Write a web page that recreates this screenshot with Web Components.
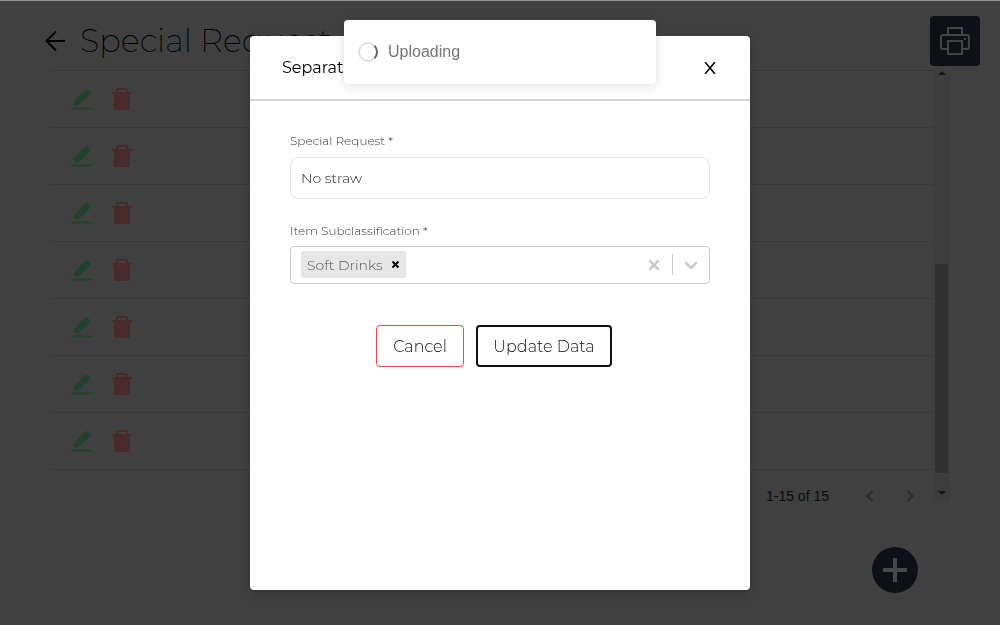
<!DOCTYPE html>
<html lang="en">
<head>
<meta charset="utf-8">
<title>Special Request</title>
<style>
html, body { margin: 0; background: #404040; }
body { font-family: Montserrat, Inter, "Open Sans", sans-serif; font-weight: 300; color: #000; }
</style>
</head>
<body>
<request-page></request-page>
<modal-dialog heading="Separate">
  <text-field label="Special Request *" value="No straw"></text-field>
  <multi-select label="Item Subclassification *" value="Soft Drinks"></multi-select>
  <action-bar></action-bar>
</modal-dialog>
<toast-message>Uploading</toast-message>

<script>
class Base extends HTMLElement {
  connectedCallback() {
    if (this.shadowRoot) return;
    const t = document.createElement('template');
    t.innerHTML = '<style>*{box-sizing:border-box}button{font:inherit;color:inherit;background:none;border:0;padding:0;margin:0;cursor:pointer}svg{display:block}</style>' + this.render();
    this.attachShadow({ mode: 'open' }).append(t.content.cloneNode(true));
  }
}

customElements.define('row-actions', class extends Base {
  render() {
    return `<style>
      :host { display: flex; align-items: center; gap: 16px; height: 57px; padding: 0 20px; box-sizing: border-box; border-bottom: 1px solid #383838; }
      button { width: 24px; height: 24px; }
    </style>
    <button aria-label="Edit"><svg width="24" height="24" viewBox="0 0 24 24" fill="#22412d"><path d="M5 13 16.500 1.500 21 6 9.500 17.500Q8 18.500 4 18Q3.500 14.500 5 13Z"/><rect x="1" y="20.500" width="22" height="2" rx="1"/></svg></button>
    <button aria-label="Delete"><svg width="24" height="24" viewBox="0 0 24 24" fill="#482a2a"><path fill-rule="evenodd" d="M6 5V3a2 2 0 0 1 2-2h8a2 2 0 0 1 2 2v2h4v2h-2v14a2 2 0 0 1-2 2H6a2 2 0 0 1-2-2V7H2V5ZM8 5h8V3H8Z"/></svg></button>`;
  }
});

customElements.define('list-scrollbar', class extends Base {
  render() {
    return `<style>
      :host { display: flex; flex-direction: column; align-items: center; justify-content: space-between; width: 17px; padding: 1px 0 7px; box-sizing: border-box; background: #3d3d3d; }
      .thumb { width: 13px; height: 209px; margin: auto 0 18px; background: #303030; }
    </style>
    <svg width="8" height="4" viewBox="0 0 8 4" fill="#141414"><path d="M0 4 4 0l4 4z"/></svg>
    <div class="thumb"></div>
    <svg width="8" height="4" viewBox="0 0 8 4" fill="#141414"><path d="M0 0h8L4 4z"/></svg>`;
  }
});

customElements.define('page-nav', class extends Base {
  render() {
    return `<style>
      :host { display: flex; align-items: center; justify-content: flex-end; height: 32px; padding: 20px 11px 0 0; box-sizing: border-box; font: 14px "Liberation Sans", Arial, sans-serif; color: #0c0c0c; }
      span { margin-right: 29px; }
      button { width: 24px; height: 24px; color: #2b2b2b; }
      button + button { margin-left: 16px; }
    </style>
    <span>1-15 of 15</span>
    <button aria-label="Previous page"><svg width="24" height="24" viewBox="0 0 24 24" fill="currentColor"><path d="M15.410 7.410 14 6l-6 6 6 6 1.410-1.410L10.830 12z"/></svg></button>
    <button aria-label="Next page"><svg width="24" height="24" viewBox="0 0 24 24" fill="currentColor"><path d="M10 6 8.590 7.410 13.170 12l-4.580 4.590L10 18l6-6z"/></svg></button>`;
  }
});

customElements.define('request-page', class extends Base {
  render() {
    return `<style>
      :host { display: block; min-height: 100vh; box-sizing: border-box; padding: 15px 20px 32px 44px; border-top: 1px solid #8e918f; }
      header { display: flex; align-items: center; height: 50px; }
      .back { width: 24px; height: 24px; margin-right: 12px; }
      h1 { flex: 1; margin: 0; font-size: 32px; line-height: 40px; font-weight: 200; white-space: nowrap; }
      .print { display: grid; place-items: center; width: 50px; height: 50px; border-radius: 4px; background: #0d1116; }
      .list { display: flex; margin: 4px 30px 0 6px; }
      .rows { flex: 1; border-top: 1px solid #383838; }
      footer { display: flex; justify-content: flex-end; padding: 45px 62px 0 0; }
      .add { display: grid; place-items: center; width: 46px; height: 46px; border-radius: 50%; background: #0d1116; }
    </style>
    <header>
      <button class="back" aria-label="Back"><svg width="24" height="24" viewBox="0 0 24 24" fill="none" stroke="#000" stroke-width="2"><path d="M21 12H3M12 2.500 2.500 12l9.500 9.500"/></svg></button>
      <h1>Special Request</h1>
      <button class="print" aria-label="Print"><svg width="30" height="30" viewBox="0 0 30 30" fill="none" stroke="#434343" stroke-width="2"><path d="M8 9V2h14v7M8 23H3a2 2 0 0 1-2-2V11a2 2 0 0 1 2-2h24a2 2 0 0 1 2 2v10a2 2 0 0 1-2 2h-5M8 15h14v13H8z"/><path d="M24 13h2"/></svg></button>
    </header>
    <div class="list">
      <div class="rows">${'<row-actions></row-actions>'.repeat(7)}<page-nav></page-nav></div>
      <list-scrollbar></list-scrollbar>
    </div>
    <footer><button class="add" aria-label="Add"><svg width="24" height="24" viewBox="0 0 24 24" stroke="#484848" stroke-width="4"><path d="M12 0v24M0 12h24"/></svg></button></footer>`;
  }
});

customElements.define('modal-dialog', class extends Base {
  render() {
    return `<style>
      :host { position: fixed; inset: 0; display: flex; align-items: center; justify-content: center; }
      section { width: 500px; max-width: 90%; min-height: 554px; border-radius: 4px; background: #fff; box-shadow: 0 4px 12px rgba(0,0,0,.2); }
      header { display: flex; align-items: center; justify-content: space-between; height: 65px; padding: 2px 32px 0; border-bottom: 2px solid #d4d4d4; }
      h2 { margin: 0; font-size: 16px; line-height: 24px; font-weight: 400; }
      .close { display: grid; place-items: center; width: 16px; height: 24px; }
      .body { display: flex; flex-direction: column; padding: 32px 40px; }
    </style>
    <section role="dialog" aria-label="${this.getAttribute('heading')}">
      <header><h2>${this.getAttribute('heading')}</h2><button class="close" aria-label="Close"><svg width="12" height="12" viewBox="0 0 12 12" stroke="#000" stroke-width="1.500"><path d="M1 0l10 12M11 0 1 12"/></svg></button></header>
      <div class="body"><slot></slot></div>
    </section>`;
  }
});

customElements.define('text-field', class extends Base {
  render() {
    return `<style>
      :host { display: block; margin-bottom: 24px; }
      label { display: block; font-size: 12px; line-height: 16px; margin-bottom: 8px; color: #333; }
      input { display: block; width: 100%; height: 42px; padding: 0 10px; border: 1px solid #e6e6e6; border-radius: 8px; background: #fff; font: inherit; font-size: 14px; color: #222; outline: 0; }
    </style>
    <label for="f">${this.getAttribute('label')}</label>
    <input id="f" value="${this.getAttribute('value')}">`;
  }
});

customElements.define('multi-select', class extends Base {
  render() {
    return `<style>
      :host { display: block; }
      label { display: block; font-size: 12px; line-height: 16px; margin-bottom: 7px; color: #333; }
      .control { display: flex; align-items: center; height: 38px; padding: 0 11px 0 10px; border: 1px solid #ccc; border-radius: 4px; }
      .tag { display: flex; align-items: center; height: 27px; padding: 0 6px; gap: 8px; border-radius: 2px; background: #e6e6e6; font-size: 14px; color: #555; white-space: nowrap; }
      input { flex: 1; min-width: 0; border: 0; padding: 0; margin: 0 8px; outline: 0; background: none; }
      .bar { width: 1px; height: 21px; margin: 0 11px 0 12px; background: #ccc; }
    </style>
    <label for="s">${this.getAttribute('label')}</label>
    <div class="control">
      <span class="tag">${this.getAttribute('value')}<button aria-label="Remove"><svg width="9" height="9" viewBox="0 0 9 9" stroke="#000" stroke-width="2"><path d="M1.500 1.500l6 6M7.500 1.500l-6 6"/></svg></button></span>
      <input id="s" role="combobox" aria-expanded="false">
      <button aria-label="Clear"><svg width="12" height="12" viewBox="0 0 12 12" stroke="#ccc" stroke-width="2.500" stroke-linecap="round"><path d="M2 2l8 8M10 2 2 10"/></svg></button>
      <span class="bar"></span>
      <button aria-label="Open"><svg width="14" height="10" viewBox="0 0 14 10" fill="none" stroke="#ccc" stroke-width="2.500" stroke-linecap="round"><path d="M2 3l5 5 5-5"/></svg></button>
    </div>`;
  }
});

customElements.define('action-bar', class extends Base {
  render() {
    return `<style>
      :host { display: flex; justify-content: center; margin-top: 41px; }
      button { height: 42px; padding-top: 2px; margin-right: 12px; border-radius: 4px; font-size: 16px; color: #111; white-space: nowrap; }
      .cancel { width: 88px; border: 1px solid #f04a4a; }
      .update { width: 136px; border: 2px solid #111; }
    </style>
    <button class="cancel">Cancel</button><button class="update">Update Data</button>`;
  }
});

customElements.define('toast-message', class extends Base {
  render() {
    return `<style>
      :host { position: fixed; top: 20px; left: 50%; transform: translateX(-50%); display: flex; align-items: center; gap: 10px; width: 312px; height: 64px; padding: 0 14px; box-sizing: border-box; border-radius: 4px; background: #fff; box-shadow: 0 1px 10px rgba(0,0,0,.1), 0 2px 15px rgba(0,0,0,.05); font: 16px/20px "Liberation Sans", Arial, sans-serif; color: #757575; }
      i { width: 20px; height: 20px; border: 2px solid #e0e0e0; border-right-color: #616161; border-radius: 50%; }
    </style>
    <i></i><slot></slot>`;
  }
});
</script>
</body>
</html>
